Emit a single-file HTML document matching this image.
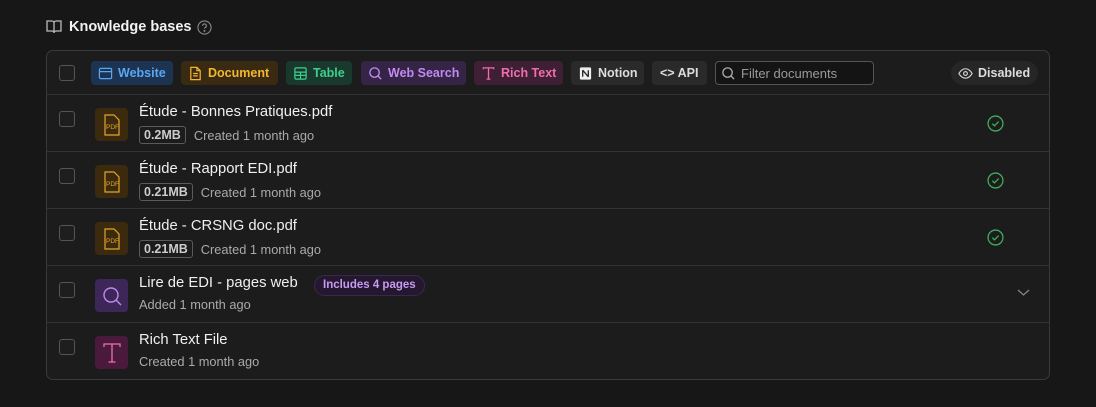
<!DOCTYPE html><html><head><style>
*{box-sizing:border-box;margin:0;padding:0}
body{width:1096px;height:407px;background:#171717;font-family:"Liberation Sans",sans-serif;color:#eee;position:relative;overflow:hidden}
.abs{position:absolute}
.title{left:69px;top:19px;font-size:14.5px;font-weight:bold;color:#f2f2f2;white-space:nowrap}
.panel{left:46px;top:50px;width:1004px;height:330px;border:1px solid #3a3a3a;border-radius:7px;background:#1c1c1c}
.hdr{left:0;top:0;width:1002px;height:44px;border-bottom:1px solid #333}
.cb{width:16px;height:16px;border:1.5px solid #555;border-radius:3px;background:#1e1e1e}
.chip{top:10px;height:24px;border-radius:4px;font-size:12.5px;font-weight:bold;display:flex;align-items:center;gap:5px;padding:0 7px;white-space:nowrap;overflow:hidden}
.chip svg{width:15px;height:15px;flex-shrink:0}
.row{left:0;width:1002px;height:57px;border-bottom:1px solid #333}
.ic{left:48px;top:13px;width:33px;height:33px;border-radius:4px;display:flex;align-items:center;justify-content:center}
.nm{left:92px;top:9px;font-size:14.8px;color:#f0f0f0;white-space:nowrap}
.sub{left:92px;top:31px;font-size:12.8px;color:#aaa;display:flex;align-items:center;gap:8px;white-space:nowrap}
.sz{border:1px solid #5a5a5a;border-radius:3px;padding:1px 4px;color:#ccc;font-weight:bold;font-size:12.5px}
.ok{left:940px;top:20px}
</style></head><body>
<svg class="abs" style="left:46px;top:20px" width="16" height="14" viewBox="0 0 16 14" fill="none" stroke="#bbb" stroke-width="1.3"><path d="M1 1h5a2 2 0 0 1 2 2v10a2 2 0 0 0-2-2H1zM15 1h-5a2 2 0 0 0-2 2v10a2 2 0 0 1 2-2h5z"/></svg>
<div class="abs title">Knowledge bases</div>
<svg class="abs" style="left:197px;top:20px" width="15" height="15" viewBox="0 0 16 16" fill="none" stroke="#888" stroke-width="1.2"><circle cx="8" cy="8" r="7"/><path d="M6 6.2a2 2 0 1 1 2.5 1.9c-.5.2-.5.6-.5 1.2"/><circle cx="8" cy="11.6" r=".5" fill="#888"/></svg>
<div class="abs panel">
 <div class="abs hdr">
  <div class="abs cb" style="left:12px;top:14px"></div>
  <div class="abs chip" style="left:44px;width:82px;background:#1c3452;color:#5aa6f0"><svg viewBox="0 0 16 16" fill="none" stroke="#5aa6f0" stroke-width="1.3"><rect x="1.5" y="2.5" width="13" height="11" rx="1.5"/><path d="M1.5 6h13M4 4.3h.1M6 4.3h.1"/></svg>Website</div>
  <div class="abs chip" style="left:134px;width:97px;background:#3a2a12;color:#f1b731"><svg viewBox="0 0 16 16" fill="none" stroke="#f1b731" stroke-width="1.3"><path d="M3 1.5h6.5L13 5v9.5H3z M9.5 1.5V5H13M5.5 8h5M5.5 10.5h5"/></svg>Document</div>
  <div class="abs chip" style="left:239px;width:66px;background:#18392c;color:#3ecf8e"><svg viewBox="0 0 16 16" fill="none" stroke="#3ecf8e" stroke-width="1.3"><rect x="2" y="2" width="12" height="12" rx="1.5"/><path d="M2 6.5h12M2 10h12M8 6.5V14"/></svg>Table</div>
  <div class="abs chip" style="left:314px;width:105px;background:#352446;color:#c18af0"><svg viewBox="0 0 16 16" fill="none" stroke="#c18af0" stroke-width="1.4"><circle cx="7" cy="7" r="5"/><path d="M10.8 10.8L14 14"/></svg>Web Search</div>
  <div class="abs chip" style="left:427px;width:89px;background:#3e1f33;color:#ef6fae"><svg viewBox="0 0 16 16" fill="none" stroke="#ef6fae" stroke-width="1.4"><path d="M2.5 3.5V2h11v1.5M8 2v12M6 14h4"/></svg>Rich Text</div>
  <div class="abs chip" style="left:524px;width:73px;background:#2a2a2a;color:#ddd"><svg viewBox="0 0 16 16"><rect x="2" y="1.5" width="12" height="13" rx="1.5" fill="#eee"/><path d="M5 4.5v7M5 4.5l6 7M11 4.5v7" stroke="#222" stroke-width="1.4" fill="none"/></svg>Notion</div>
  <div class="abs chip" style="left:605px;width:55px;background:#2a2a2a;color:#ddd;padding:0 8px">&lt;&gt; API</div>
  <div class="abs" style="left:668px;top:10px;width:159px;height:24px;border:1px solid #555;border-radius:4px;background:#141414;font-size:13px;color:#999;display:flex;align-items:center;gap:5px;padding-left:5px;white-space:nowrap"><svg width="15" height="15" viewBox="0 0 16 16" fill="none" stroke="#aaa" stroke-width="1.4" style="flex-shrink:0"><circle cx="7" cy="7" r="5"/><path d="M10.8 10.8L14 14"/></svg>Filter documents</div>
  <div class="abs chip" style="left:904px;width:87px;background:#262626;color:#ddd;border-radius:12px"><svg viewBox="0 0 16 16" fill="none" stroke="#ccc" stroke-width="1.3"><path d="M1 8s2.5-5 7-5 7 5 7 5-2.5 5-7 5-7-5-7-5z"/><circle cx="8" cy="8" r="2"/></svg>Disabled</div>
 </div>
 <div class="abs row" style="top:44px">
  <div class="abs cb" style="left:12px;top:16px"></div>
  <div class="abs ic" style="background:#3b2a0e"><svg width="20" height="22" viewBox="0 0 20 22" fill="none" stroke="#e3a52a" stroke-width="1.2"><path d="M3 1h9l5 5v15H3z"/><text x="4" y="15" font-size="6.5" fill="#e3a52a" stroke="none" font-family="Liberation Sans">PDF</text></svg></div>
  <div class="abs nm">Étude - Bonnes Pratiques.pdf</div>
  <div class="abs sub"><span class="sz">0.2MB</span>Created 1 month ago</div>
  <svg class="abs ok" width="17" height="17" viewBox="0 0 16 16" fill="none" stroke="#3fae5e" stroke-width="1.2"><circle cx="8" cy="8" r="7"/><path d="M5 8.2l2 2 4-4"/></svg>
 </div>
 <div class="abs row" style="top:101px">
  <div class="abs cb" style="left:12px;top:16px"></div>
  <div class="abs ic" style="background:#3b2a0e"><svg width="20" height="22" viewBox="0 0 20 22" fill="none" stroke="#e3a52a" stroke-width="1.2"><path d="M3 1h9l5 5v15H3z"/><text x="4" y="15" font-size="6.5" fill="#e3a52a" stroke="none" font-family="Liberation Sans">PDF</text></svg></div>
  <div class="abs nm">Étude - Rapport EDI.pdf</div>
  <div class="abs sub"><span class="sz">0.21MB</span>Created 1 month ago</div>
  <svg class="abs ok" width="17" height="17" viewBox="0 0 16 16" fill="none" stroke="#3fae5e" stroke-width="1.2"><circle cx="8" cy="8" r="7"/><path d="M5 8.2l2 2 4-4"/></svg>
 </div>
 <div class="abs row" style="top:158px">
  <div class="abs cb" style="left:12px;top:16px"></div>
  <div class="abs ic" style="background:#3b2a0e"><svg width="20" height="22" viewBox="0 0 20 22" fill="none" stroke="#e3a52a" stroke-width="1.2"><path d="M3 1h9l5 5v15H3z"/><text x="4" y="15" font-size="6.5" fill="#e3a52a" stroke="none" font-family="Liberation Sans">PDF</text></svg></div>
  <div class="abs nm">Étude - CRSNG doc.pdf</div>
  <div class="abs sub"><span class="sz">0.21MB</span>Created 1 month ago</div>
  <svg class="abs ok" width="17" height="17" viewBox="0 0 16 16" fill="none" stroke="#3fae5e" stroke-width="1.2"><circle cx="8" cy="8" r="7"/><path d="M5 8.2l2 2 4-4"/></svg>
 </div>
 <div class="abs row" style="top:215px">
  <div class="abs cb" style="left:12px;top:16px"></div>
  <div class="abs ic" style="background:#3d2658"><svg width="22" height="22" viewBox="0 0 22 22" fill="none" stroke="#c18af0" stroke-width="1.4"><circle cx="10" cy="10" r="7"/><path d="M15 15l5 5"/></svg></div>
  <div class="abs nm">Lire de EDI - pages web</div>
  <div class="abs" style="left:267px;top:9px;height:21px;padding:0 8px;border-radius:11px;background:#25172f;border:1px solid #3a2850;color:#c79af2;font-size:11.5px;font-weight:bold;line-height:19px;white-space:nowrap">Includes 4 pages</div>
  <div class="abs sub">Added 1 month ago</div>
  <svg class="abs" style="left:970px;top:22px" width="13" height="9" viewBox="0 0 13 9" fill="none" stroke="#888" stroke-width="1.2"><path d="M1 2l5.5 5L12 2"/></svg>
 </div>
 <div class="abs row" style="top:272px;border-bottom:none">
  <div class="abs cb" style="left:12px;top:16px"></div>
  <div class="abs ic" style="background:#4a1a3c"><svg width="20" height="22" viewBox="0 0 20 22" fill="none" stroke="#ef6fae" stroke-width="1.3"><path d="M2 5V2h16v3M10 2v18M6.5 20h7"/></svg></div>
  <div class="abs nm">Rich Text File</div>
  <div class="abs sub">Created 1 month ago</div>
 </div>
</div>
</body></html>
